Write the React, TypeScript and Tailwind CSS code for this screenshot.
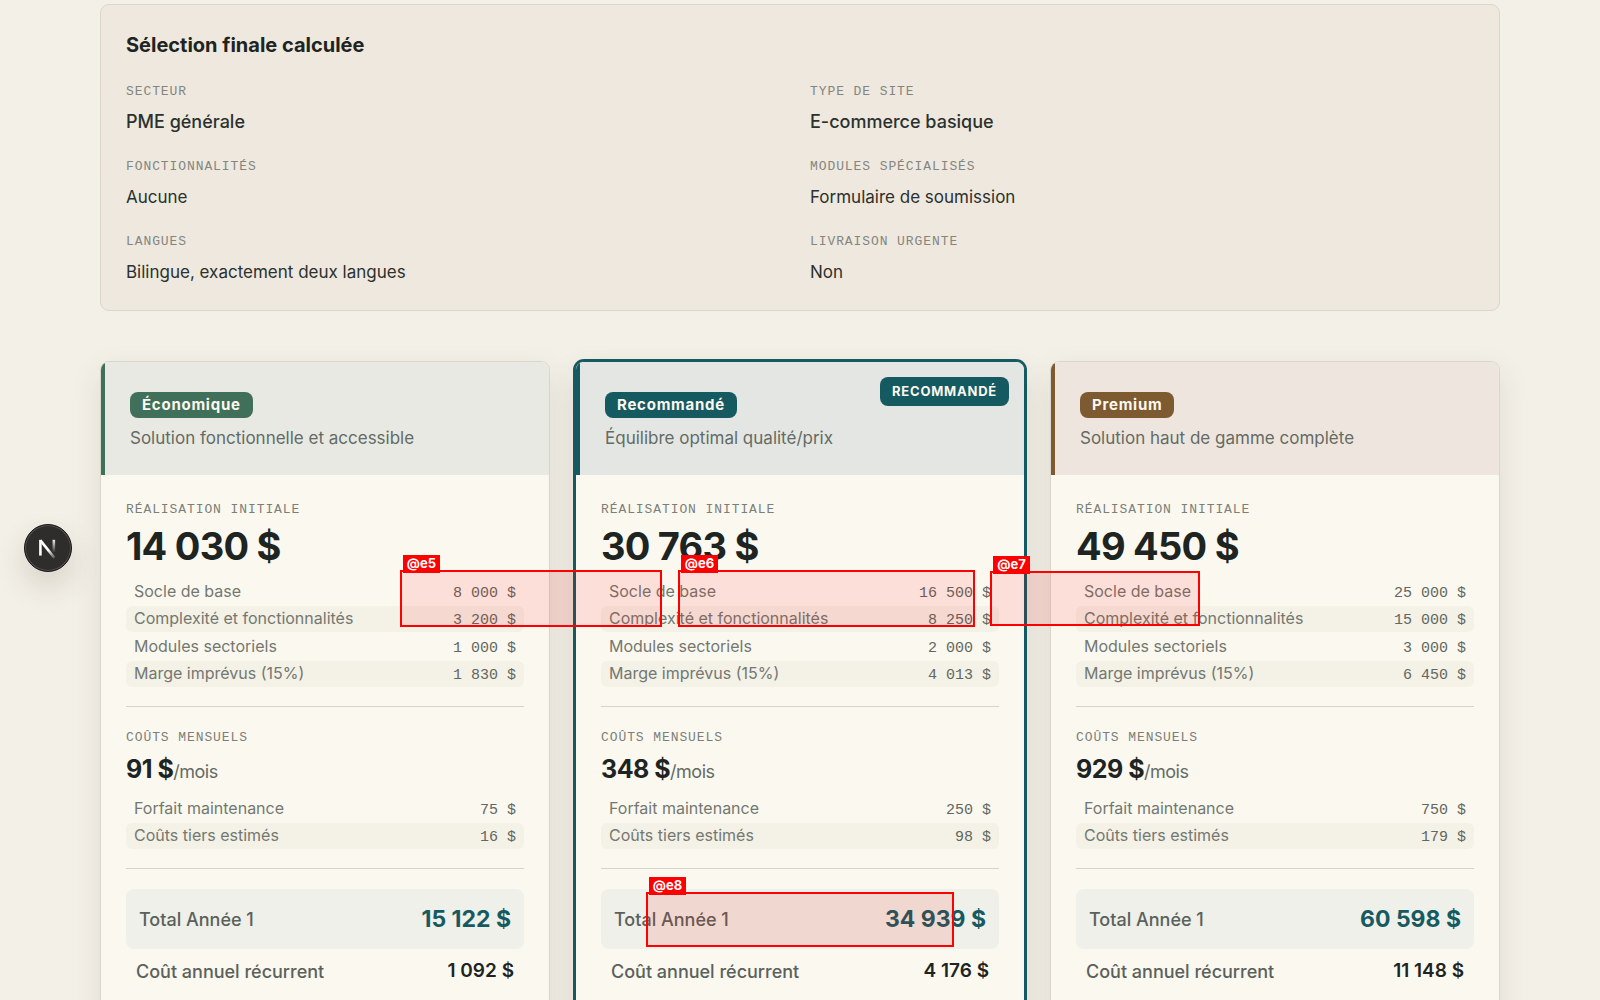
import React from "react";

const MONO = "font-['Liberation_Mono',monospace]";

type Line = [label: string, amount: string];

interface Plan {
  name: string;
  tagline: string;
  featured?: boolean;
  card: string;
  header: string;
  badge: string;
  initial: string;
  initialLines: Line[];
  monthly: string;
  monthlyLines: Line[];
  yearOne: string;
  recurring: string;
}

const selection: { label: string; value: string; strong?: boolean }[] = [
  { label: "Secteur", value: "PME générale", strong: true },
  { label: "Type de site", value: "E-commerce basique", strong: true },
  { label: "Fonctionnalités", value: "Aucune" },
  { label: "Modules spécialisés", value: "Formulaire de soumission" },
  { label: "Langues", value: "Bilingue, exactement deux langues" },
  { label: "Livraison urgente", value: "Non" },
];

const plans: Plan[] = [
  {
    name: "Économique",
    tagline: "Solution fonctionnelle et accessible",
    card: "border-[#d9d6cc] shadow-[0_12px_32px_rgba(60,45,40,0.10)]",
    header: "border-[#41705a] bg-[#e7e9e2]",
    badge: "bg-[#41705a]",
    initial: "14 030 $",
    initialLines: [
      ["Socle de base", "8 000 $"],
      ["Complexité et fonctionnalités", "3 200 $"],
      ["Modules sectoriels", "1 000 $"],
      ["Marge imprévus (15%)", "1 830 $"],
    ],
    monthly: "91 $",
    monthlyLines: [
      ["Forfait maintenance", "75 $"],
      ["Coûts tiers estimés", "16 $"],
    ],
    yearOne: "15 122 $",
    recurring: "1 092 $",
  },
  {
    name: "Recommandé",
    tagline: "Équilibre optimal qualité/prix",
    featured: true,
    card: "border-[#165a61] shadow-[0_0_0_2px_#165a61,0_12px_32px_rgba(60,45,40,0.12)]",
    header: "border-[#165a61] bg-[#e3e6e3]",
    badge: "bg-[#165a61]",
    initial: "30 763 $",
    initialLines: [
      ["Socle de base", "16 500 $"],
      ["Complexité et fonctionnalités", "8 250 $"],
      ["Modules sectoriels", "2 000 $"],
      ["Marge imprévus (15%)", "4 013 $"],
    ],
    monthly: "348 $",
    monthlyLines: [
      ["Forfait maintenance", "250 $"],
      ["Coûts tiers estimés", "98 $"],
    ],
    yearOne: "34 939 $",
    recurring: "4 176 $",
  },
  {
    name: "Premium",
    tagline: "Solution haut de gamme complète",
    card: "border-[#d9d6cc] shadow-[0_12px_32px_rgba(60,45,40,0.10)]",
    header: "border-[#7d5a30] bg-[#eee6de]",
    badge: "bg-[#7d5a30]",
    initial: "49 450 $",
    initialLines: [
      ["Socle de base", "25 000 $"],
      ["Complexité et fonctionnalités", "15 000 $"],
      ["Modules sectoriels", "3 000 $"],
      ["Marge imprévus (15%)", "6 450 $"],
    ],
    monthly: "929 $",
    monthlyLines: [
      ["Forfait maintenance", "750 $"],
      ["Coûts tiers estimés", "179 $"],
    ],
    yearOne: "60 598 $",
    recurring: "11 148 $",
  },
];

function Caption({ children }: { children: React.ReactNode }) {
  return (
    <h3 className={`${MONO} text-[13px] leading-4 tracking-[0.07em] text-[#7b7f78] uppercase`}>
      {children}
    </h3>
  );
}

function Lines({ items }: { items: Line[] }) {
  return (
    <dl className="flex flex-col gap-0.5 text-[16px] leading-6 text-[#737871]">
      {items.map(([label, amount]) => (
        <div
          key={label}
          className="flex h-[25px] items-baseline justify-between rounded-md px-2 even:h-[26px] even:bg-[#f4f1e7]"
        >
          <dt>{label}</dt>
          <dd className={`${MONO} text-[15px] whitespace-pre text-[#62675f]`}>{amount}</dd>
        </div>
      ))}
    </dl>
  );
}

function PlanCard({ plan }: { plan: Plan }) {
  return (
    <article className={`relative overflow-hidden rounded-[9px] border bg-[#fbf8f0] ${plan.card}`}>
      <header className={`h-[113px] border-l-4 pt-[30px] pl-[25px] ${plan.header}`}>
        <h2
          className={`flex h-[26px] w-fit items-center rounded-lg px-3 text-[15px] font-bold tracking-[0.05em] text-[#fbf8f0] ${plan.badge}`}
        >
          {plan.name}
        </h2>
        <p className="mt-1.5 text-[17px] leading-7 text-[#646b65]">{plan.tagline}</p>
        {plan.featured && (
          <span className="absolute top-[15px] right-[15px] flex h-[29px] items-center rounded-lg bg-[#165a61] px-3 text-[13px] font-bold tracking-[0.06em] text-[#fbf8f0] uppercase">
            Recommandé
          </span>
        )}
      </header>
      <div className="px-[25px] pt-[27px] pb-10">
        <section className="border-b border-[#d6d4ca] pb-[19px]">
          <Caption>Réalisation initiale</Caption>
          <p className="mt-1 mb-[9px] text-[38px] leading-[48px] font-bold tracking-[-0.02em] text-[#1d2422]">
            {plan.initial}
          </p>
          <Lines items={plan.initialLines} />
        </section>
        <section className="border-b border-[#d6d4ca] pt-[23px] pb-[19px]">
          <Caption>Coûts mensuels</Caption>
          <p className="mt-2 mb-[9px] text-[25px] leading-[30px] font-bold tracking-[-0.02em] text-[#1d2422]">
            {plan.monthly}
            <span className="text-[18px] font-normal text-[#646b65]">/mois</span>
          </p>
          <Lines items={plan.monthlyLines} />
        </section>
        <dl className="pt-5 text-[18px] font-medium text-[#5a615c]">
          <div className="flex h-[60px] items-center justify-between rounded-lg bg-[#eef0e9] px-[13px]">
            <dt>Total Année 1</dt>
            <dd className="text-[23px] font-bold text-[#165a61]">{plan.yearOne}</dd>
          </div>
          <div className="flex h-11 items-center justify-between px-2.5">
            <dt>Coût annuel récurrent</dt>
            <dd className="text-[19px] font-semibold text-[#1d2422]">{plan.recurring}</dd>
          </div>
        </dl>
      </div>
    </article>
  );
}

const marks = [
  { id: "@e5", box: "left-[400px] top-[570px] w-[262px] h-[57px]" },
  { id: "@e6", box: "left-[678px] top-[570px] w-[297px] h-[57px]" },
  { id: "@e7", box: "left-[990px] top-[571px] w-[210px] h-[55px]" },
  { id: "@e8", box: "left-[646px] top-[892px] w-[308px] h-[55px]" },
];

function Mark({ id, box }: { id: string; box: string }) {
  return (
    <div className={`pointer-events-none absolute border-2 border-[#ff0000] bg-[#ff0000]/10 ${box}`}>
      <span className="absolute -top-[17px] left-px flex h-[18px] w-[37px] items-center justify-center bg-[#ff0000] text-[13px] font-bold text-white">
        {id}
      </span>
    </div>
  );
}

function DevToolsButton() {
  return (
    <button
      type="button"
      aria-label="Next.js"
      className="absolute top-[524px] left-6 flex size-12 items-center justify-center rounded-full border border-[#171717] bg-[#2e2d2b] shadow-[inset_0_0_0_1px_#51504d,0_14px_30px_rgba(60,50,30,0.16)]"
    >
      <svg viewBox="0 0 24 24" className="size-7" fill="none" strokeWidth="2.2">
        <defs>
          <linearGradient id="diag" x1="13" y1="13" x2="18" y2="20" gradientUnits="userSpaceOnUse">
            <stop stopColor="#fff" />
            <stop offset="1" stopColor="#fff" stopOpacity="0.2" />
          </linearGradient>
          <linearGradient id="stem" x1="17" y1="4" x2="17" y2="16" gradientUnits="userSpaceOnUse">
            <stop stopColor="#fff" />
            <stop offset="1" stopColor="#fff" stopOpacity="0" />
          </linearGradient>
        </defs>
        <path d="M5.500 18.500V5" stroke="#fff" />
        <path d="M5.500 5.500L17.500 20.500" stroke="url(#diag)" />
        <path d="M17 5V15.500" stroke="url(#stem)" />
      </svg>
    </button>
  );
}

export default function App() {
  return (
    <div className="relative h-screen overflow-hidden bg-[#f3f0e7] font-['Inter',sans-serif] text-[#2b312e]">
      <main className="mx-auto flex w-full max-w-[1600px] flex-col gap-[50px] px-[100px] pt-1">
        <section className="rounded-[9px] border border-[#dad6ca] bg-[#eee8de] px-[25px] pt-[25px] pb-[22px]">
          <h2 className="text-[20px] leading-[30px] font-bold text-[#1d2422]">Sélection finale calculée</h2>
          <dl className="mt-6 grid grid-cols-2 gap-x-5 gap-y-[21px]">
            {selection.map(({ label, value, strong }) => (
              <div key={label}>
                <dt className={`${MONO} text-[13px] leading-4 tracking-[0.07em] text-[#84867e] uppercase`}>
                  {label}
                </dt>
                <dd className={`mt-1.5 leading-8 ${strong ? "text-[18px] font-medium" : "text-[17px]"}`}>
                  {value}
                </dd>
              </div>
            ))}
          </dl>
        </section>
        <div className="grid grid-cols-3 gap-[25px]">
          {plans.map((plan) => (
            <PlanCard key={plan.name} plan={plan} />
          ))}
        </div>
      </main>
      <DevToolsButton />
      {marks.map((mark) => (
        <Mark key={mark.id} {...mark} />
      ))}
    </div>
  );
}
